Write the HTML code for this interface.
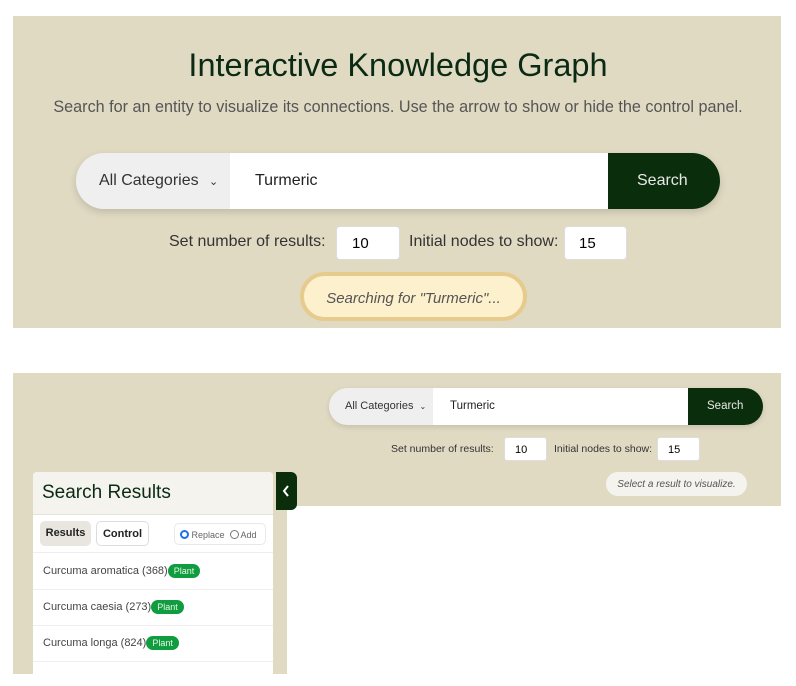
<!DOCTYPE html>
<html><head><meta charset="utf-8"><style>
*{box-sizing:border-box;margin:0;padding:0}
body{width:796px;height:686px;background:#fff;font-family:"Liberation Sans","DejaVu Sans",sans-serif;position:relative;overflow:hidden}
.a{position:absolute}
.bg{background:#e0dac3}
.t{white-space:nowrap}
</style></head><body>
<div class="a bg" style="left:13px;top:16px;width:768px;height:312px"></div>
<div class="a t" style="left:0;width:796px;top:47px;text-align:center;font-size:32.5px;color:#0b2a14">Interactive Knowledge Graph</div>
<div class="a t" style="left:0;width:796px;top:98px;text-align:center;font-size:16.2px;color:#555">Search for an entity to visualize its connections. Use the arrow to show or hide the control panel.</div>

<div class="a" style="left:76px;top:153px;width:644px;height:56px;border-radius:28px;overflow:hidden;box-shadow:0 3px 8px rgba(0,0,0,.15);display:flex">
<div style="width:154px;background:#efefef;font-size:16px;color:#333;padding:19px 0 0 23px" class="t">All Categories <span style="font-size:11px;margin-left:6px">&#8964;</span></div>
<div style="width:378px;background:#fff;font-size:16px;color:#222;padding:19px 0 0 25px">Turmeric</div>
<div style="width:112px;background:#0a2e0c;color:#e8e8e8;font-size:16px;padding:19px 0 0 29px">Search</div>
</div>
<div class="a t" style="left:169px;top:233px;font-size:16px;color:#333">Set number of results:</div>
<div class="a" style="left:336px;top:226px;width:64px;height:34px;background:#fff;border:1px solid #ddd;border-radius:4px;font-size:15px;padding:8px 0 0 15px">10</div>
<div class="a t" style="left:409px;top:233px;font-size:16px;color:#333">Initial nodes to show:</div>
<div class="a" style="left:564px;top:226px;width:63px;height:34px;background:#fff;border:1px solid #ddd;border-radius:4px;font-size:15px;padding:8px 0 0 14px">15</div>
<div class="a t" style="left:300px;top:272px;width:227px;height:49px;background:#fdf0cc;border:4px solid #e6cb8d;border-radius:25px;font-size:15px;font-style:italic;color:#555;text-align:center;padding-top:14px">Searching for "Turmeric"...</div>

<div class="a bg" style="left:13px;top:373px;width:768px;height:133px"></div>
<div class="a bg" style="left:13px;top:500px;width:274px;height:174px"></div>
<div class="a" style="left:329px;top:388px;width:434px;height:37px;border-radius:19px;overflow:hidden;box-shadow:0 2px 6px rgba(0,0,0,.12);display:flex">
<div style="width:104px;background:#efefef;font-size:11px;color:#333;padding:12px 0 0 16px" class="t">All Categories <span style="font-size:8px;margin-left:3px">&#8964;</span></div>
<div style="width:255px;background:#fff;font-size:11.5px;color:#222;padding:12px 0 0 17px">Turmeric</div>
<div style="width:75px;background:#0a2e0c;color:#e8e8e8;font-size:11.5px;padding:12px 0 0 19px">Search</div>
</div>
<div class="a t" style="left:391px;top:443px;font-size:10.5px;color:#333">Set number of results:</div>
<div class="a" style="left:504px;top:437px;width:43px;height:24px;background:#fff;border:1px solid #ddd;border-radius:3px;font-size:11px;padding:6px 0 0 10px">10</div>
<div class="a t" style="left:554px;top:443px;font-size:10.5px;color:#333">Initial nodes to show:</div>
<div class="a" style="left:657px;top:437px;width:43px;height:24px;background:#fff;border:1px solid #ddd;border-radius:3px;font-size:11px;padding:6px 0 0 10px">15</div>
<div class="a t" style="left:606px;top:472px;width:141px;height:24px;background:#f5f3ee;border-radius:12px;font-size:10px;font-style:italic;color:#555;text-align:center;padding-top:7px">Select a result to visualize.</div>

<div class="a" style="left:33px;top:472px;width:240px;height:202px;background:#fff;border-radius:4px 4px 0 0;overflow:hidden">
<div style="height:43px;background:#f5f3ee;border-bottom:1px solid #e5e2da;font-size:19px;color:#0b2a14;padding:10px 0 0 9px">Search Results</div>
<div class="a" style="left:7px;top:49px;width:51px;height:25px;background:#e8e6df;border-radius:5px;font-size:11px;font-weight:bold;color:#222;text-align:center;padding-top:6px">Results</div>
<div class="a" style="left:63px;top:49px;width:53px;height:25px;background:#fff;border:1px solid #ddd;border-radius:5px;font-size:11px;font-weight:bold;color:#222;text-align:center;padding-top:6px">Control</div>
<div class="a t" style="left:141px;top:51px;width:92px;height:22px;border:1px solid #e8e8e8;border-radius:5px;font-size:9px;color:#666;padding:6px 0 0 5px">
<span style="display:inline-block;width:9px;height:9px;border-radius:50%;border:2.5px solid #1a73e8;vertical-align:-1px"></span> Replace&nbsp;&nbsp;<span style="display:inline-block;width:9px;height:9px;border-radius:50%;border:1px solid #777;vertical-align:-1px"></span> Add</div>
<div class="a" style="left:0;top:80px;width:240px;border-top:1px solid #eee"></div>
<div class="a t" style="left:10px;top:93px;font-size:11px;color:#444">Curcuma aromatica (368)<span style="background:#0f9d3f;color:#e8f5e8;border-radius:8px;padding:2px 6px;font-size:9px">Plant</span></div>
<div class="a" style="left:0;top:117px;width:240px;border-top:1px solid #eee"></div>
<div class="a t" style="left:10px;top:129px;font-size:11px;color:#444">Curcuma caesia (273)<span style="background:#0f9d3f;color:#e8f5e8;border-radius:8px;padding:2px 6px;font-size:9px">Plant</span></div>
<div class="a" style="left:0;top:153px;width:240px;border-top:1px solid #eee"></div>
<div class="a t" style="left:10px;top:165px;font-size:11px;color:#444">Curcuma longa (824)<span style="background:#0f9d3f;color:#e8f5e8;border-radius:8px;padding:2px 6px;font-size:9px">Plant</span></div>
<div class="a" style="left:0;top:189px;width:240px;border-top:1px solid #eee"></div>
</div>
<div class="a" style="left:276px;top:472px;width:21px;height:38px;background:#0a2e0c;border-radius:0 6px 6px 0">
<svg width="21" height="38"><path d="M12 14 L8 19 L12 24" stroke="#fff" stroke-width="2" fill="none"/></svg></div>
</body></html>
